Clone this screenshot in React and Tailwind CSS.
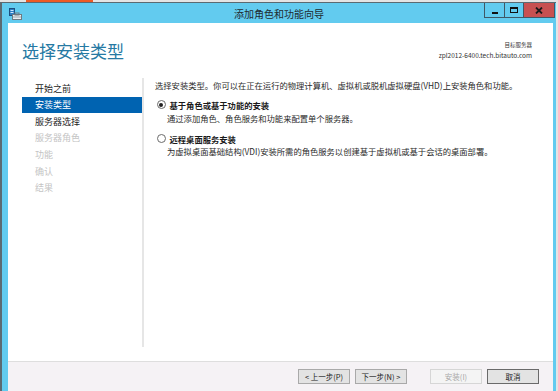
import React from "react";

const navItems = [
  { label: "开始之前", state: "done" },
  { label: "安装类型", state: "active" },
  { label: "服务器选择", state: "done" },
  { label: "服务器角色", state: "off" },
  { label: "功能", state: "off" },
  { label: "确认", state: "off" },
  { label: "结果", state: "off" },
];

const font = { fontFamily: '"Noto Sans CJK SC", "Noto Sans", sans-serif' };

function AppIcon() {
  return (
    <svg width="13" height="12" viewBox="0 0 13 12">
      <rect x="0.5" y="0.5" width="5" height="7" fill="#2d7fc3" stroke="#1c4f80" />
      <rect x="1.5" y="2" width="3" height="1" fill="#cfe8ff" />
      <rect x="1.5" y="4" width="3" height="1" fill="#cfe8ff" />
      <rect x="3.5" y="6.5" width="9" height="5" fill="#e9eef2" stroke="#6f7a82" />
      <rect x="6" y="5" width="4" height="2" fill="none" stroke="#6f7a82" />
      <rect x="4" y="8.5" width="8" height="1" fill="#9aa6ae" />
    </svg>
  );
}

function Radio({ checked }) {
  return (
    <span className="flex h-[9px] w-[9px] items-center justify-center rounded-full border border-[#6b6b6b] bg-white">
      {checked && <span className="h-[4px] w-[4px] rounded-full bg-[#222]" />}
    </span>
  );
}

function Btn({ children, disabled, primary }) {
  return (
    <div
      className={
        "flex h-[15px] w-[52px] items-center justify-center border text-[7.5px] leading-none " +
        (disabled
          ? "border-[#d6d6d6] bg-[#f4f4f4] text-[#a8a8a8]"
          : primary
          ? "border-[#6a6a6a] bg-[#e3e3e3] text-[#1a1a1a]"
          : "border-[#a9a9a9] bg-[#e3e3e3] text-[#1a1a1a]")
      }
    >
      {children}
    </div>
  );
}

export default function App() {
  return (
    <div className="flex h-[391px] w-[558px] flex-col overflow-hidden bg-[#e4e4e4]" style={font}>
      {/* strip of the window behind */}
      <div className="flex h-[2px] shrink-0">
        <div className="ml-[26px] w-[67px] bg-[#ee5a24]" />
      </div>

      <div className="mr-[2px] flex flex-1 flex-col border-l-2 border-t border-[#5b6a72] bg-[#62cbef]">
        {/* title bar */}
        <div className="grid h-[20px] shrink-0 grid-cols-[1fr_auto_1fr] items-start">
          <div className="pl-[7px] pt-[5px]">
            <AppIcon />
          </div>
          <div className="pt-[4px] text-[10px] leading-[14px] text-[#1f2a30]">添加角色和功能向导</div>
          <div className="flex justify-end pr-[1px]">
            <div className="flex h-[15px] border border-t-0 border-[#3f5866]">
              <div className="flex w-[19px] items-end justify-center pb-[3px]">
                <span className="h-[2px] w-[6px] bg-[#111]" />
              </div>
              <div className="flex w-[19px] items-center justify-center border-l border-[#3f5866]">
                <span className="h-[6px] w-[8px] border border-t-2 border-[#111]" />
              </div>
              <div className="flex w-[31px] items-center justify-center border-l border-[#3f5866] bg-[#c75050]">
                <svg width="8" height="7" viewBox="0 0 8 7">
                  <path d="M1 0.5 L7 6.5 M7 0.5 L1 6.5" stroke="#1a1a1a" strokeWidth="1.8" />
                </svg>
              </div>
            </div>
          </div>
        </div>

        {/* content */}
        <div className="ml-[6px] mr-[3px] flex flex-1 flex-col bg-white">
          {/* header */}
          <div className="flex h-[55px] shrink-0 items-start justify-between pl-[14px] pr-[21px]">
            <div className="pt-[17px] text-[17px] leading-[22px] text-[#2679a3]">选择安装类型</div>
            <div className="flex flex-col items-end pt-[17px] text-[6.5px] leading-[10px] text-[#333]">
              <span className="text-[5.5px]">目标服务器</span>
              <span>zpl2012-6400.tech.bitauto.com</span>
            </div>
          </div>

          {/* body */}
          <div className="flex h-[283px] shrink-0 pb-[14px] pl-[14px]">
            <div className="flex w-[120px] flex-col pt-[2px]">
              {navItems.map((item) => (
                <div
                  key={item.label}
                  className={
                    "flex h-[16.6px] items-center pl-[13px] text-[9px] " +
                    (item.state === "active"
                      ? "bg-[#0063b1] text-white"
                      : item.state === "off"
                      ? "text-[#c4c4c4]"
                      : "text-[#1e1e1e]")
                  }
                >
                  {item.label}
                </div>
              ))}
            </div>
            <div className="w-[2px] bg-[#e6e6e6]" />
            <div className="flex flex-col pl-[11px] pt-[1px] text-[8.3px] leading-[12px] text-[#2a2a2a]">
              <div>选择安装类型。你可以在正在运行的物理计算机、虚拟机或脱机虚拟硬盘(VHD)上安装角色和功能。</div>
              <div className="mt-[7.8px] flex h-[12px] items-center gap-[4px] pl-[1.5px]">
                <Radio checked />
                <span className="font-bold text-[#1a1a1a]">基于角色或基于功能的安装</span>
              </div>
              <div className="mt-[1.4px] pl-[12px]">通过添加角色、角色服务和功能来配置单个服务器。</div>
              <div className="mt-[8.6px] flex h-[12px] items-center gap-[4px] pl-[1.5px]">
                <Radio />
                <span className="font-bold text-[#1a1a1a]">远程桌面服务安装</span>
              </div>
              <div className="pl-[12px]">为虚拟桌面基础结构(VDI)安装所需的角色服务以创建基于虚拟机或基于会话的桌面部署。</div>
            </div>
          </div>

          {/* footer */}
          <div className="flex flex-1 items-start justify-end border-t border-[#dedede] bg-[#f5f2f5] pr-[14px] pt-[7px]">
            <div className="flex gap-[5px]">
              <Btn>&lt; 上一步(P)</Btn>
              <Btn>下一步(N) &gt;</Btn>
            </div>
            <div className="ml-[23px] flex gap-[5px]">
              <Btn disabled>安装(I)</Btn>
              <Btn primary>取消</Btn>
            </div>
          </div>
        </div>
      </div>
    </div>
  );
}
